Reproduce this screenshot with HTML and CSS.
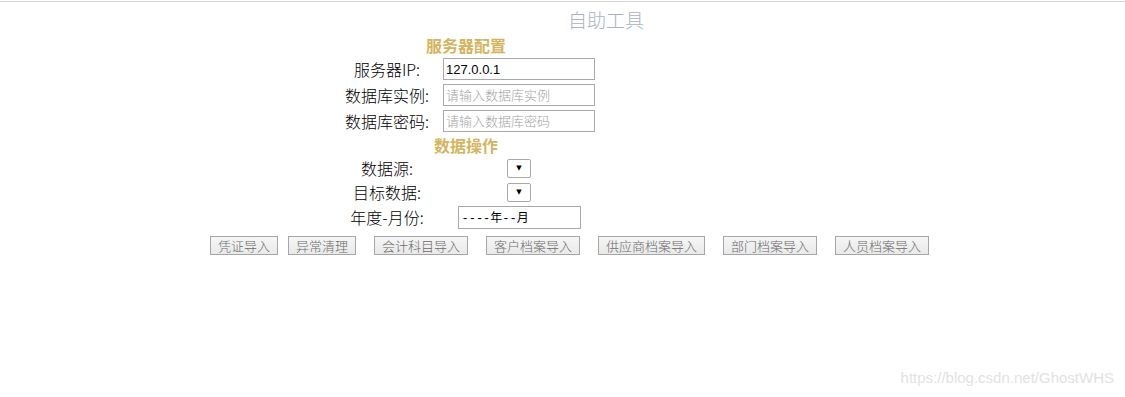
FILE: index.html
```html
<html>
<head>
<meta charset="utf-8">
<title>自助工具</title>
<link rel="stylesheet" href="styles.css">
</head>
<body>
	<div class="topline"></div>
	<div class="title">自助工具</div>

	<div class="form">
		<div class="heading">服务器配置</div>
		<div class="rows server">
			<label>服务器IP:</label>
			<span><input class="text" type="text" value="127.0.0.1"></span>
			<label>数据库实例:</label>
			<span><input class="text" type="text" placeholder="请输入数据库实例"></span>
			<label>数据库密码:</label>
			<span><input class="text" type="password" placeholder="请输入数据库密码"></span>
		</div>

		<div class="heading second">数据操作</div>
		<div class="rows data">
			<label>数据源:</label>
			<span><span class="select">&#9660;</span></span>
			<label>目标数据:</label>
			<span><span class="select">&#9660;</span></span>
			<label>年度-月份:</label>
			<span><input class="month" type="text" value="----年--月"></span>
		</div>
	</div>

	<div class="buttons">
		<button class="btn">凭证导入</button>
		<button class="btn near">异常清理</button>
		<button class="btn">会计科目导入</button>
		<button class="btn">客户档案导入</button>
		<button class="btn">供应商档案导入</button>
		<button class="btn">部门档案导入</button>
		<button class="btn">人员档案导入</button>
	</div>

	<div class="watermark">https://blog.csdn.net/GhostWHS</div>
</body>
</html>
```

FILE: styles.css
```css
*
{
	box-sizing: border-box;
}

body
{
	margin: 0;
	padding: 0;
	width: 1125px;
	height: 397px;
	position: relative;
	overflow: hidden;
	background: #ffffff;
	font-family: "Noto Sans CJK SC", "Liberation Sans", sans-serif;
	color: #000000;
}

.topline
{
	margin-top: 1px;
	height: 1px;
	background-color: #d3d3d3;
}

.title
{
	height: 35px;
	line-height: 35px;
	padding-left: 87px;
	text-align: center;
	font-size: 19px;
	font-weight: 300;
	color: #a9b3c3;
}

.form
{
	width: 264px;
	margin-left: 334px;
}

.heading
{
	height: 16px;
	line-height: 16px;
	text-align: center;
	font-size: 16px;
	font-weight: bold;
	color: #d4b45c;
}

.heading.second
{
	height: 22px;
	line-height: 22px;
}

.rows
{
	display: grid;
	grid-template-columns: 106px 158px;
	align-items: center;
	justify-items: center;
}

.rows.server
{
	margin-top: 3px;
	grid-template-rows: 26px 26px 26px;
}

.rows.data
{
	grid-template-rows: 24px 24px 26px;
}

.rows label
{
	font-family: "Noto Sans CJK SC", "Liberation Mono", monospace;
	font-size: 16px;
	font-weight: 300;
	line-height: 20px;
	white-space: nowrap;
}

.rows > span
{
	display: flex;
	justify-content: center;
}

input.text
{
	width: 152px;
	height: 22px;
	margin: 0;
	padding: 0 2px;
	border: 1px solid #a9a9a9;
	font-family: "Liberation Sans", "Noto Sans CJK SC", sans-serif;
	font-size: 13px;
	color: #000000;
	outline: none;
}

input.text::placeholder
{
	font-family: "Noto Sans CJK SC", sans-serif;
	font-weight: 300;
	color: #a3a3a3;
}

.select
{
	display: flex;
	align-items: center;
	justify-content: center;
	width: 24px;
	height: 19px;
	border: 1px solid #a9a9a9;
	border-radius: 2px;
	font-family: "DejaVu Sans", sans-serif;
	font-size: 7px;
	color: #000000;
	background: #ffffff;
}

input.month
{
	width: 123px;
	height: 23px;
	margin: 0;
	padding: 0 3px;
	border: 1px solid #a9a9a9;
	font-family: "Liberation Mono", "Noto Sans CJK SC", monospace;
	font-size: 12px;
	color: #000000;
	outline: none;
}

.buttons
{
	display: flex;
	margin-top: 6px;
	margin-left: 210px;
	gap: 18px;
}

.btn
{
	height: 19px;
	margin: 0;
	padding: 0 7px;
	border: 1px solid #a6a6a6;
	border-radius: 0;
	background: linear-gradient(#f6f6f6, #e9e9e9);
	font-family: "Noto Sans CJK SC", sans-serif;
	font-size: 13px;
	font-weight: 300;
	line-height: 17px;
	color: #6a6a6a;
	white-space: nowrap;
}

.btn.near
{
	margin-left: -8px;
}

.watermark
{
	position: absolute;
	right: 11px;
	top: 368px;
	font-family: "Liberation Sans", sans-serif;
	font-size: 15px;
	line-height: 20px;
	color: #e2e2e2;
}
```
